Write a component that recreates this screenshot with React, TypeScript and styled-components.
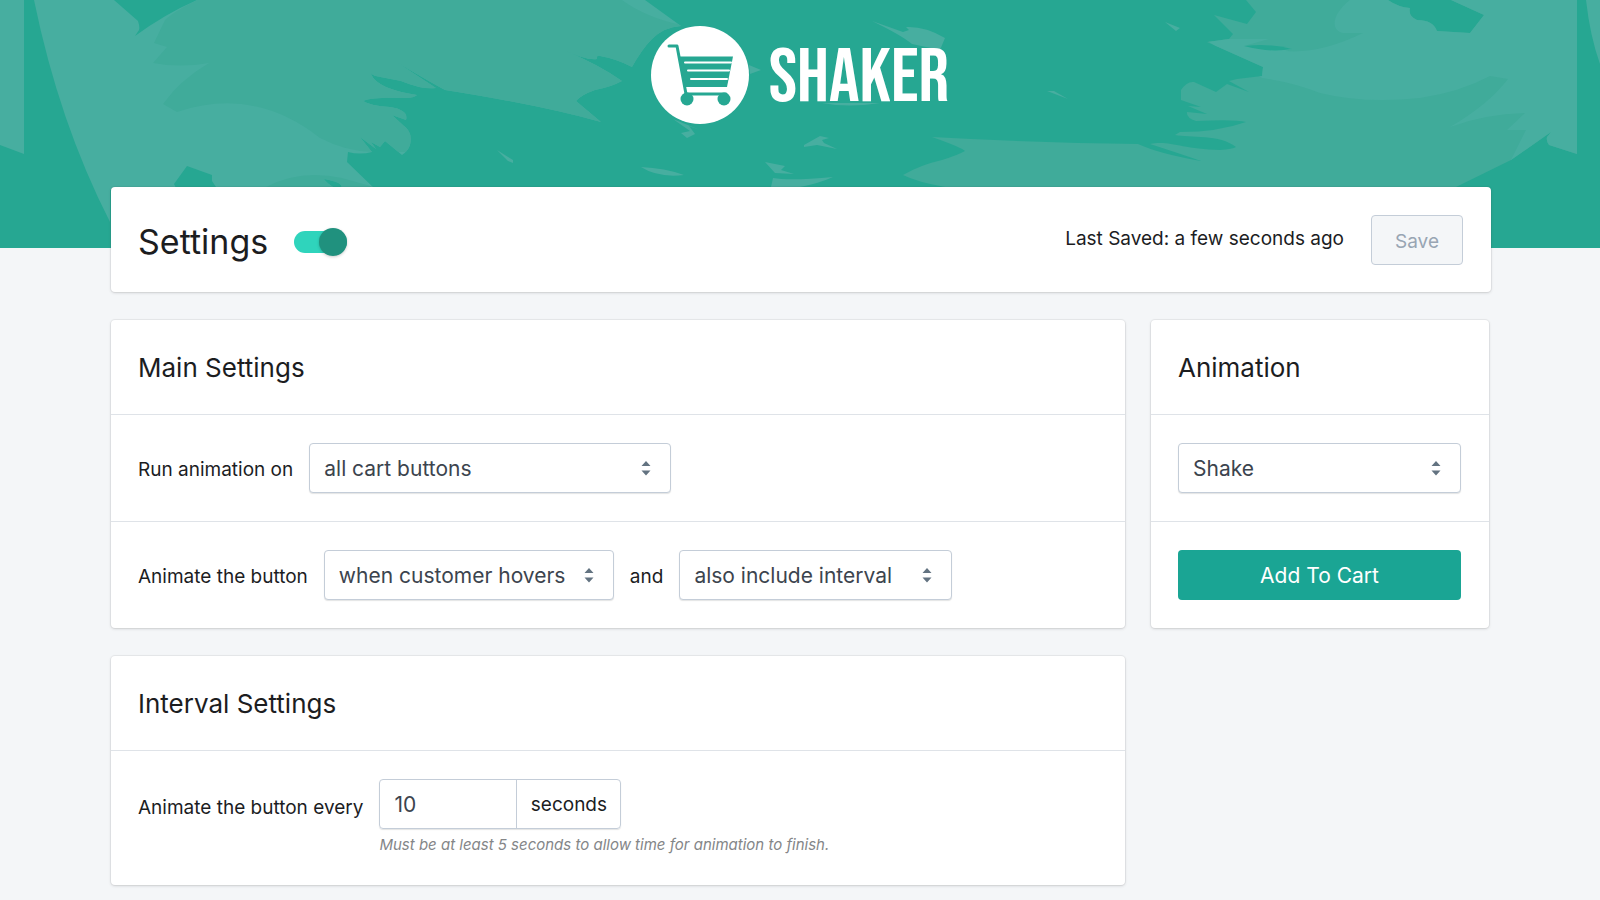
import React, { useState } from "react";
import styled, { createGlobalStyle } from "styled-components";

const GlobalStyle = createGlobalStyle`
  *, *::before, *::after { box-sizing: border-box; }
  body {
    margin: 0;
    background: #f4f6f8;
    color: #1c1d1f;
    font-family: Inter, "Liberation Sans", sans-serif;
    font-size: 19px;
    line-height: 28px;
  }
  h1, h2, p { margin: 0; font-weight: 400; }
`;

const Page = styled.div`
  min-height: 100vh;
`;

const Banner = styled.header`
  position: relative;
  height: 248px;
  padding-top: 26px;
  overflow: hidden;
  background: #26a792;
`;

const BrushArt = styled.svg`
  position: absolute;
  inset: 0;
  width: 100%;
  height: 100%;
`;

const Brand = styled.div`
  position: relative;
  display: flex;
  align-items: center;
  justify-content: center;
  gap: 20px;
  height: 98px;
`;

const BrandMark = styled.svg`
  width: 98px;
  height: 98px;
`;

const BrandName = styled.span`
  padding-top: 8px;
  color: #fff;
  font-family: "Bebas Neue", "Liberation Sans Narrow", "Roboto Condensed", sans-serif;
  font-size: 76px;
  font-weight: 400;
  line-height: 76px;
`;

const Content = styled.main`
  position: relative;
  display: flex;
  flex-direction: column;
  gap: 28px;
  margin-top: -61px;
  padding: 0 109px 14px 111px;
`;

const Card = styled.section`
  background: #fff;
  border-radius: 4px;
  box-shadow: 0 0 0 1px rgba(63, 63, 68, 0.06), 0 1px 3px rgba(63, 63, 68, 0.18);
`;

const TitleCard = styled(Card)`
  display: flex;
  align-items: center;
  justify-content: space-between;
  height: 105px;
  padding: 0 28px 0 27px;
`;

const TitleGroup = styled.div`
  display: flex;
  align-items: center;
  gap: 26px;
  padding-top: 4px;
`;

const PageTitle = styled.h1`
  font-size: 34px;
  line-height: 44px;
`;

const Switch = styled.input`
  appearance: none;
  display: flex;
  align-items: center;
  justify-content: flex-end;
  width: 53px;
  height: 22px;
  margin: 0;
  border-radius: 11px;
  background: #2fd4bc;
  cursor: pointer;

  &::before {
    content: "";
    width: 28px;
    height: 28px;
    flex: none;
    border-radius: 50%;
    background: #20917e;
    box-shadow: 0 1px 3px rgba(0, 0, 0, 0.2);
  }

  &:not(:checked) {
    justify-content: flex-start;
    background: #c4cdd5;
  }
`;

const SaveGroup = styled.div`
  display: flex;
  align-items: center;
  gap: 27px;
`;

const SavedNote = styled.p`
  padding-bottom: 2px;
`;

const SaveButton = styled.button`
  width: 92px;
  height: 50px;
  padding: 4px 0 0;
  border: 1px solid #c4cdd8;
  border-radius: 4px;
  background: #f4f6f8;
  color: #98a5b3;
  font: inherit;
`;

const Columns = styled.div`
  display: grid;
  grid-template-columns: 3fr 1fr;
  align-items: start;
  gap: 26px;
  padding-right: 2px;
`;

const Stack = styled.div`
  display: grid;
  gap: 28px;
`;

const CardHeading = styled.h2`
  padding: 30px 28px 28px 27px;
  font-size: 26px;
  line-height: 36px;
`;

const Row = styled.div<{ $align?: string }>`
  display: flex;
  align-items: ${(p) => p.$align ?? "center"};
  gap: 16px;
  padding: 28px 28px 28px 27px;
  border-top: 1px solid #dfe3e8;
`;

const FieldLabel = styled.label`
  padding-top: 4px;
  white-space: nowrap;
`;

const TallLabel = styled(FieldLabel)`
  line-height: 50px;
`;

const SelectBox = styled.span<{ $width: string }>`
  position: relative;
  display: block;
  width: ${(p) => p.$width};
`;

const SelectField = styled.select`
  appearance: none;
  display: block;
  width: 100%;
  height: 50px;
  padding: 2px 40px 0 14px;
  border: 1px solid #c4cdd8;
  border-radius: 4px;
  background: #fff;
  box-shadow: 0 1px 1px rgba(22, 29, 37, 0.12);
  color: #3c444e;
  font: inherit;
  font-size: 21px;
`;

const Arrows = styled.svg`
  position: absolute;
  top: 17px;
  right: 20px;
  width: 10px;
  height: 16px;
  pointer-events: none;
`;

const AddButton = styled.button`
  width: 100%;
  height: 50px;
  padding: 2px 0 0;
  border: 0;
  border-radius: 4px;
  background: #1aa594;
  color: #fff;
  font: inherit;
  font-size: 21px;
  cursor: pointer;
`;

const InputGroup = styled.div`
  display: flex;
  width: 242px;
  height: 50px;
  border: 1px solid #c4cdd8;
  border-radius: 4px;
  box-shadow: 0 1px 1px rgba(22, 29, 37, 0.12);
`;

const NumberInput = styled.input`
  width: 137px;
  padding: 2px 14px 0;
  border: 0;
  border-right: 1px solid #c4cdd8;
  background: none;
  color: #3c444e;
  font: inherit;
  font-size: 21px;
`;

const Suffix = styled.span`
  flex: 1;
  text-align: center;
  line-height: 50px;
`;

const HelpText = styled.p`
  padding-top: 4px;
  color: #848688;
  font-size: 15px;
  font-style: italic;
  line-height: 24px;
`;

const LIGHT = "#47aea0";
const MID = "#40ab9a";
const BASE = "#26a792";

const LEFT_STROKE =
  "M34 0H114L138 21Q140 27 139 30L135 36Q165 14 197 0H645L681 26Q664 27 652 39Q642 49 632 67Q617 59 600 56Q596 55 597 59Q588 61 561 49Q598 64 622 81Q611 87 595 90Q581 95 576 101L601 122Q540 105 445 90Q430 82 398 63L436 88Q423 90 401 81C384 77 373 77 371 73C373 82 386 90 417 95Q414 98 405 98Q372 97 363 101Q371 106 390 107Q409 110 406 120L392 115L404 126Q413 132 410 145Q408 151 402 155L385 141L380 147L371 142L376 149L360 137L372 152Q360 155 348 152L347 162L376 190L340 190Q347 183 324 179Q326 183 338 190H218L212 181V175L187 166L174 184L177 190H110V222Q59 122 34 0Z";

const RIGHT_STROKE =
  "M945 187Q917 182 903 175Q920 165 942 160Q958 155 965 151Q963 148 932 137Q1040 143 1138 144Q1160 154 1201 161Q1178 153 1150 144C1170 140 1180 149 1220 150Q1233 149 1236 147C1220 134 1190 138 1175 135L1180 132Q1218 132 1246 122Q1235 119 1196 121Q1186 118 1187 112L1207 114L1188 106L1201 107L1181 100V90Q1187 81 1194 82L1216 92L1227 84L1249 92L1229 81L1237 79L1262 76L1263 67L1207 42L1229 39L1233 34L1214 15L1247 24L1256 12L1246 0H1388Q1398 7 1410 8Q1408 16 1417 20Q1433 20 1437 31L1470 33L1484 15L1451 0H1577V154L1549 145Q1546 141 1547 137L1551 132L1511 160L1456 187Z";

function Brushes() {
  return (
    <BrushArt viewBox="0 0 1600 248" preserveAspectRatio="xMidYMin slice" aria-hidden="true">
      <defs>
        <clipPath id="left-stroke">
          <path d={LEFT_STROKE} />
        </clipPath>
        <clipPath id="right-stroke">
          <path d={RIGHT_STROKE} />
        </clipPath>
      </defs>
      <path d="M0 0H24V154L0 145Z M1586 0H1600V64Q1590 36 1586 0Z" fill={LIGHT} />
      <path d={LEFT_STROKE} fill={LIGHT} />
      <g clipPath="url(#left-stroke)">
        <path
          d="M197 0Q173 12 165 20L154 43L167 47L153 63Q180 68 209 63Q180 80 163 104L177 112Q254 86 320 138Q345 151 372 152H700V28Q652 22 622 0Z M266 187Q300 169 342 178L374 187Z"
          fill={MID}
        />
      </g>
      <path d={RIGHT_STROKE} fill={MID} />
      <g clipPath="url(#right-stroke)">
        <path
          d="M1350 0C1332 14 1330 30 1343 33H1363Q1320 54 1285 51L1292 49Q1270 43 1244 46L1269 39H1205L1262 78Q1292 82 1320 93Q1365 104 1420 98Q1460 92 1490 76L1508 79Q1488 105 1450 127Q1485 114 1525 113L1507 130L1526 130L1510 162H1580V0Z"
          fill={LIGHT}
        />
      </g>
      <path d="M1244 46Q1270 43 1292 49Q1270 53 1244 46Z" fill={BASE} />
      <path
        d="M673 119L690 131L681 133L687 138L695 134L689 126L700 130Z M641 167Q665 168 684 175Q658 178 641 167Z M497 150L513 160V163L508 161Z M749 65L761 70L750 74Z M872 21L903 32L909 30L906 27Q925 26 945 38L940 50L912 44Q901 35 872 21Z M822 103H880Q848 108 822 103Z M804 145L820 136L829 138L822 140L824 143L837 149L817 145L804 147Z M765 162L785 166L781 170L794 174L775 173Z M773 178Q790 181 833 177Q820 183 800 187H771Z M1165 22L1180 28L1176 31Z M1047 91L1054 91L1068 99Z"
        fill={LIGHT}
      />
    </BrushArt>
  );
}

function CartMark() {
  return (
    <BrandMark viewBox="0 0 98 98" aria-hidden="true">
      <circle cx="49" cy="49" r="49" fill="#fff" />
      <g fill="none" stroke={BASE} strokeLinecap="round" strokeLinejoin="round">
        <path d="M18 20H26L35 68" strokeWidth="3" />
        <path d="M36 68H75" strokeWidth="3" />
      </g>
      <path d="M28 30.500H82L76 61H34Z" fill={BASE} />
      <path d="M34 36.500H80M37 44.500H78M40 53H76" stroke="#fff" strokeWidth="2" strokeLinecap="round" />
      <circle cx="36" cy="73" r="6.500" fill={BASE} />
      <circle cx="73" cy="73" r="6.500" fill={BASE} />
    </BrandMark>
  );
}

interface ChoiceProps {
  id: string;
  width: string;
  options: string[];
  label?: string;
}

function Choice({ id, width, options, label }: ChoiceProps) {
  return (
    <SelectBox $width={width}>
      <SelectField id={id} aria-label={label}>
        {options.map((o) => (
          <option key={o}>{o}</option>
        ))}
      </SelectField>
      <Arrows viewBox="0 0 10 16" aria-hidden="true">
        <path d="M5 1L9.500 6H0.500Z M5 15.500L9.500 10.500H0.500Z" fill="#637381" />
      </Arrows>
    </SelectBox>
  );
}

export default function App() {
  const [enabled, setEnabled] = useState(true);
  const [seconds, setSeconds] = useState("10");

  return (
    <Page>
      <GlobalStyle />
      <Banner>
        <Brushes />
        <Brand>
          <CartMark />
          <BrandName>SHAKER</BrandName>
        </Brand>
      </Banner>
      <Content>
        <TitleCard>
          <TitleGroup>
            <PageTitle>Settings</PageTitle>
            <Switch
              type="checkbox"
              role="switch"
              aria-label="Enable animations"
              checked={enabled}
              onChange={(e) => setEnabled(e.target.checked)}
            />
          </TitleGroup>
          <SaveGroup>
            <SavedNote>Last Saved: a few seconds ago</SavedNote>
            <SaveButton type="button" disabled>
              Save
            </SaveButton>
          </SaveGroup>
        </TitleCard>
        <Columns>
          <Stack>
            <Card>
              <CardHeading>Main Settings</CardHeading>
              <Row>
                <FieldLabel htmlFor="target">Run animation on</FieldLabel>
                <Choice id="target" width="362px" options={["all cart buttons"]} />
              </Row>
              <Row>
                <FieldLabel htmlFor="trigger">Animate the button</FieldLabel>
                <Choice id="trigger" width="290px" options={["when customer hovers"]} />
                <FieldLabel htmlFor="interval-mode">and</FieldLabel>
                <Choice id="interval-mode" width="273px" options={["also include interval"]} />
              </Row>
            </Card>
            <Card>
              <CardHeading>Interval Settings</CardHeading>
              <Row $align="flex-start">
                <TallLabel htmlFor="seconds">Animate the button every</TallLabel>
                <div>
                  <InputGroup>
                    <NumberInput
                      id="seconds"
                      inputMode="numeric"
                      value={seconds}
                      onChange={(e) => setSeconds(e.target.value)}
                    />
                    <Suffix>seconds</Suffix>
                  </InputGroup>
                  <HelpText>Must be at least 5 seconds to allow time for animation to finish.</HelpText>
                </div>
              </Row>
            </Card>
          </Stack>
          <Card>
            <CardHeading>Animation</CardHeading>
            <Row>
              <Choice id="animation" width="100%" options={["Shake"]} label="Animation" />
            </Row>
            <Row>
              <AddButton type="button">Add To Cart</AddButton>
            </Row>
          </Card>
        </Columns>
      </Content>
    </Page>
  );
}
